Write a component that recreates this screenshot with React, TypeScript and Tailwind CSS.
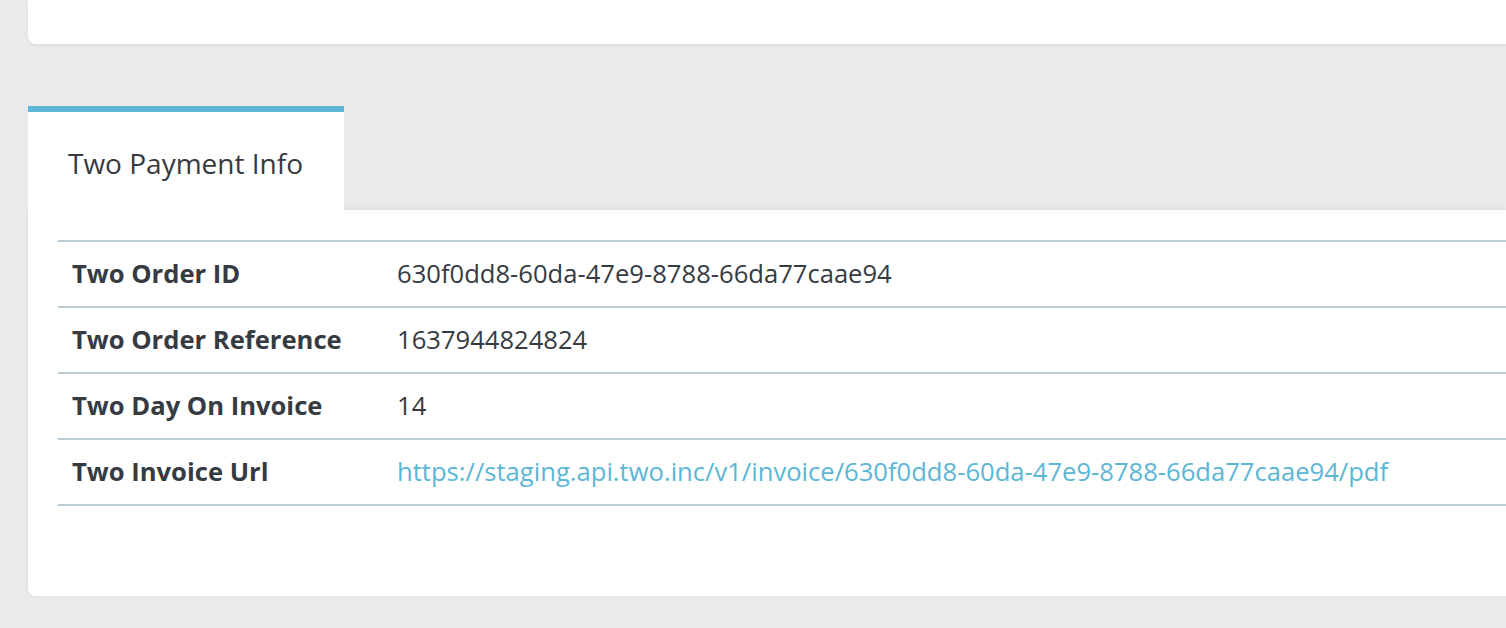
import React from 'react';

const rows: { label: string; value: string; link?: boolean }[] = [
  { label: 'Two Order ID', value: '630f0dd8-60da-47e9-8788-66da77caae94' },
  { label: 'Two Order Reference', value: '1637944824824' },
  { label: 'Two Day On Invoice', value: '14' },
  {
    label: 'Two Invoice Url',
    value: 'https://staging.api.two.inc/v1/invoice/630f0dd8-60da-47e9-8788-66da77caae94/pdf',
    link: true,
  },
];

export default function App() {
  return (
    <div
      className="min-h-[628px] w-full overflow-hidden bg-[#e9eaec] pl-[28px] pb-[32px] text-[#363a41]"
      style={{ fontFamily: '"Open Sans", "Liberation Sans", sans-serif' }}
    >
      {/* card above, cut by the top edge */}
      <div className="h-[44px] rounded-bl-lg bg-white shadow-[0_2px_3px_rgba(0,0,0,0.06)]" />

      <div className="mt-[62px]">
        <div className="relative z-10 w-[316px] border-t-[6px] border-[#5db7d5] bg-white pl-[40px] pt-[31px] pb-[27px]">
          <h3 className="text-[28px] leading-[40px] font-normal">Two Payment Info</h3>
        </div>

        <div className="rounded-bl-lg bg-white pl-[30px] pt-[30px] pb-[90px] shadow-[0_-1px_4px_rgba(0,0,0,0.07)]">
          <table className="w-full border-collapse text-[25.6px] leading-[36px]">
            <tbody>
              {rows.map((r) => (
                <tr key={r.label} className="border-y-2 border-[#bbcdd2]">
                  <td className="w-[325px] px-[14px] py-[14px] font-bold whitespace-nowrap">{r.label}</td>
                  <td className="px-[14px] py-[14px] whitespace-nowrap">
                    {r.link ? (
                      <a href="#" className="text-[#5cb6d5]">
                        {r.value}
                      </a>
                    ) : (
                      r.value
                    )}
                  </td>
                </tr>
              ))}
            </tbody>
          </table>
        </div>
      </div>
    </div>
  );
}
